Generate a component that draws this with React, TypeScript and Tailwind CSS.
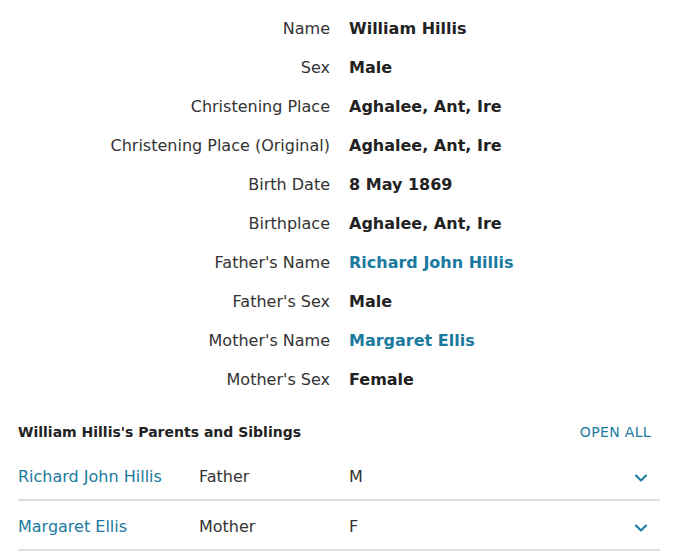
import { ChevronDown } from 'lucide-react';

// --- Data ---
interface Field {
  label: string;
  value: string;
  link?: boolean;
}

const FIELDS: Field[] = [
  { label: 'Name', value: 'William Hillis' },
  { label: 'Sex', value: 'Male' },
  { label: 'Christening Place', value: 'Aghalee, Ant, Ire' },
  { label: 'Christening Place (Original)', value: 'Aghalee, Ant, Ire' },
  { label: 'Birth Date', value: '8 May 1869' },
  { label: 'Birthplace', value: 'Aghalee, Ant, Ire' },
  { label: "Father's Name", value: 'Richard John Hillis', link: true },
  { label: "Father's Sex", value: 'Male' },
  { label: "Mother's Name", value: 'Margaret Ellis', link: true },
  { label: "Mother's Sex", value: 'Female' },
];

const FAMILY = [
  { name: 'Richard John Hillis', relation: 'Father', sex: 'M' },
  { name: 'Margaret Ellis', relation: 'Mother', sex: 'F' },
];

export default function App() {
  return (
    <div className="w-[677px] h-[555px] bg-white overflow-hidden text-[#333] font-['DejaVu_Sans',Verdana,sans-serif]">
      {/* Record fields */}
      <div className="pt-[17px] flex flex-col gap-[16px]">
        {FIELDS.map((f) => (
          <div key={f.label} className="flex items-baseline text-[16px] leading-[23px]">
            <div className="w-[330px] shrink-0 text-right">{f.label}</div>
            <div
              className={`pl-[19px] font-bold ${f.link ? 'text-[#1a7a9e]' : 'text-[#222]'}`}
            >
              {f.value}
            </div>
          </div>
        ))}
      </div>

      {/* Family */}
      <div className="mt-[31px] pl-[18px] pr-[17px]">
        <div className="flex items-center justify-between pr-[9px]">
          <h3 className="text-[14px] font-bold text-[#222]">William Hillis's Parents and Siblings</h3>
          <button className="text-[14px] text-[#1a7a9e] tracking-wide">OPEN ALL</button>
        </div>
        <div className="mt-[8px]">
          {FAMILY.map((p) => (
            <div
              key={p.name}
              className="flex items-center h-[50px] pt-[3px] border-b-2 border-[#dedede] text-[16px]"
            >
              <div className="w-[181px] text-[#1a7a9e]">{p.name}</div>
              <div className="w-[150px]">{p.relation}</div>
              <div className="flex-1">{p.sex}</div>
              <ChevronDown size={20} strokeWidth={2.5} className="text-[#1a7a9e] mr-[9px] mt-[2px]" />
            </div>
          ))}
        </div>
      </div>
    </div>
  );
}
